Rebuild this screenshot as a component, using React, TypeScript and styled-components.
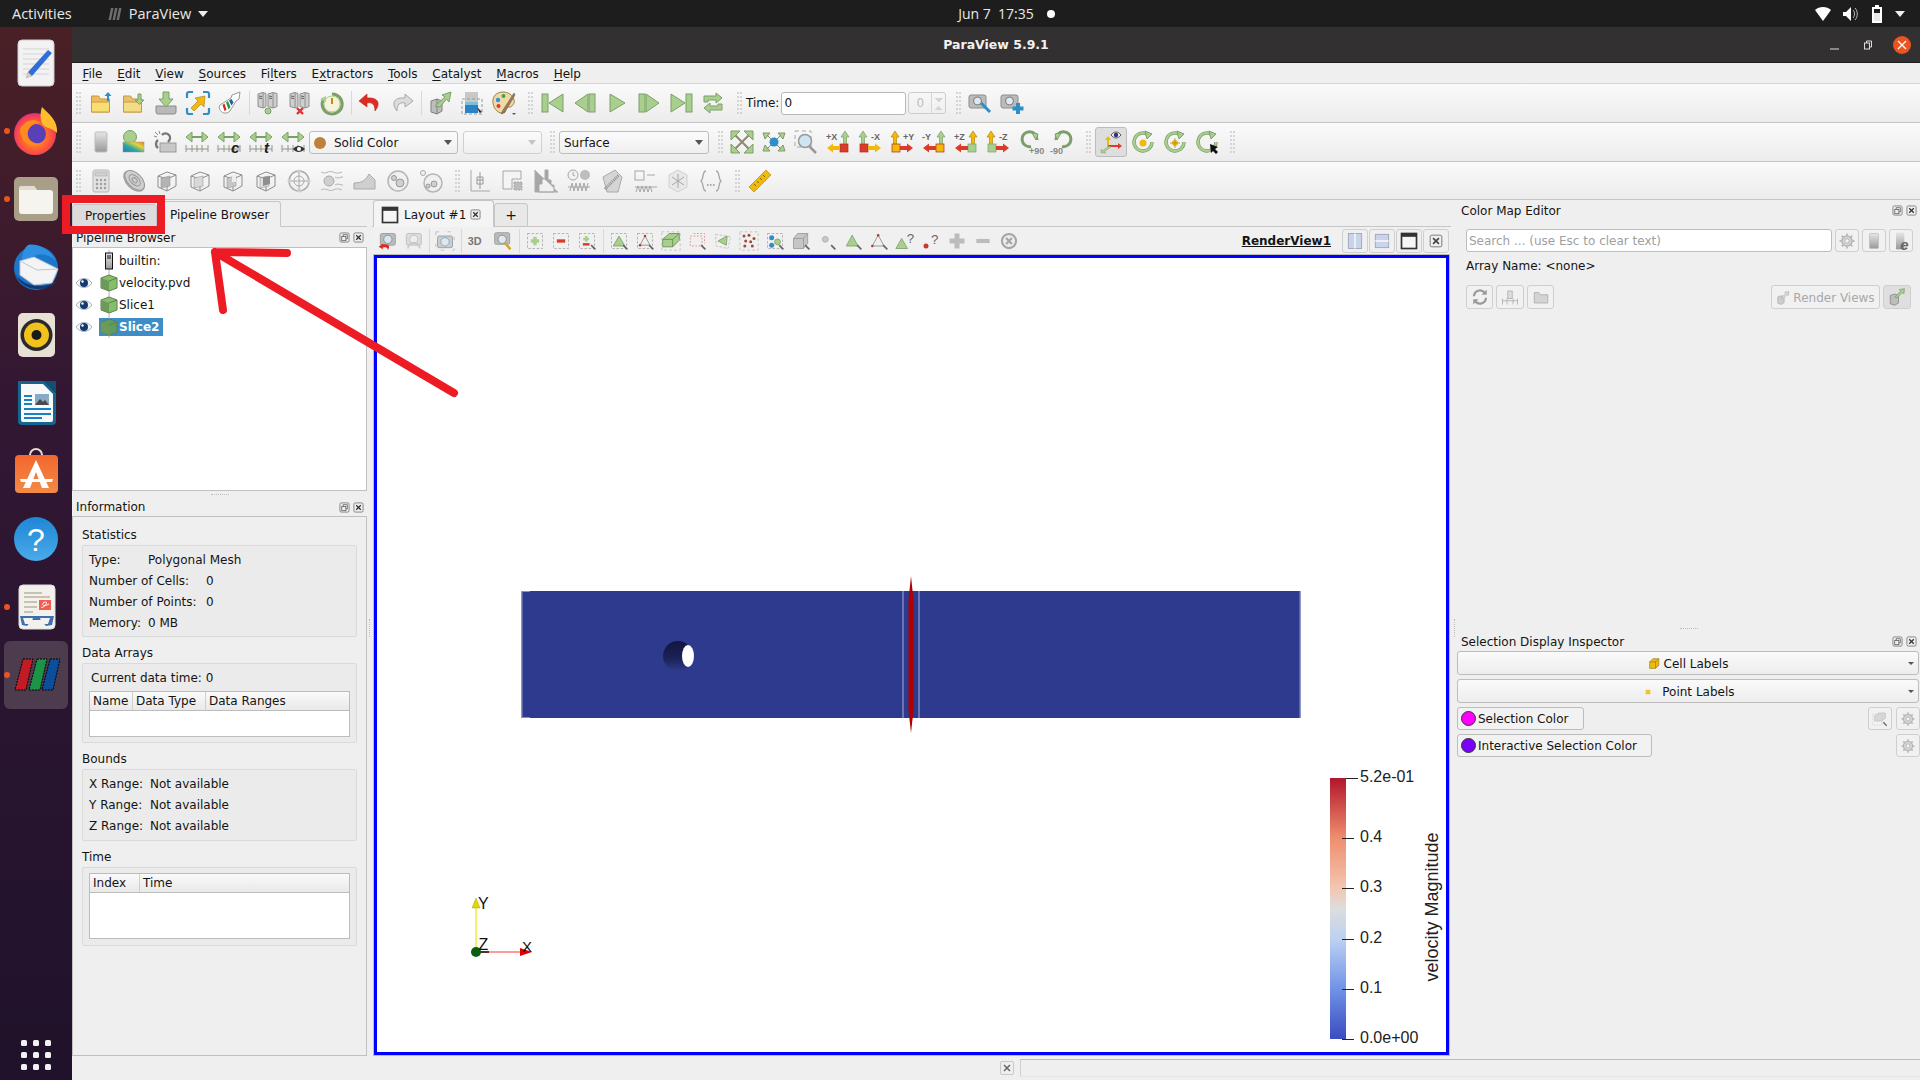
import React from "react";
import styled, { createGlobalStyle } from "styled-components";

const GlobalStyle = createGlobalStyle`
  html, body { margin: 0; padding: 0; width: 1920px; height: 1080px; overflow: hidden; }
  body { font-family: "DejaVu Sans", "Liberation Sans", sans-serif; font-size: 12px; color: #141414; background: #efefef; }
  * { box-sizing: border-box; }
`;

/* ---------- shell ---------- */
const Page = styled.div`
  position: relative;
  width: 1920px;
  height: 1080px;
  display: flex;
  flex-direction: column;
`;
const TopBar = styled.div`
  height: 27px;
  background: #1d1d1d;
  color: #e8e8e8;
  font-family: "Open Sans", "Noto Sans", sans-serif;
  font-size: 14.5px;
  display: grid;
  grid-template-columns: 1fr auto 1fr;
  align-items: center;
  padding: 0 15px 0 12px;
`;
const TopLeft = styled.div`
  display: flex;
  align-items: center;
`;
const AppMenu = styled.div`
  display: flex;
  align-items: center;
  gap: 7px;
  margin-left: 36px;
`;
const Clock = styled.div`
  display: flex;
  align-items: center;
  gap: 13px;
  font-size: 14px;
  padding-left: 96px;
`;
const RecDot = styled.span`
  width: 8px;
  height: 8px;
  border-radius: 50%;
  background: #fff;
`;
const Tray = styled.div`
  display: flex;
  justify-content: flex-end;
  align-items: center;
  gap: 12px;
`;
const Body = styled.div`
  flex: 1;
  display: flex;
  min-height: 0;
`;
const Dock = styled.div`
  width: 72px;
  background: linear-gradient(180deg, #4a2026 0%, #321733 36%, #2a1530 62%, #20122a 100%);
  display: flex;
  flex-direction: column;
  align-items: center;
  padding: 2px 0 10px;
`;
const DockItem = styled.div<{ $active?: boolean }>`
  position: relative;
  width: 64px;
  height: 68px;
  display: flex;
  align-items: center;
  justify-content: center;
  border-radius: 6px;
  background: ${(p) => (p.$active ? "#4d3b4e" : "transparent")};
`;
const RunDot = styled.span`
  position: absolute;
  left: 0;
  top: 31px;
  width: 6px;
  height: 6px;
  border-radius: 50%;
  background: #e95420;
`;
const AppGrid = styled.div`
  margin-top: auto;
  display: grid;
  grid-template-columns: repeat(3, 6px);
  gap: 6px;
`;
const AppGridDot = styled.span`
  width: 6px;
  height: 6px;
  border-radius: 1.5px;
  background: #f2f2f2;
`;
const Window = styled.div`
  flex: 1;
  display: flex;
  flex-direction: column;
  min-width: 0;
`;
const TitleBar = styled.div`
  position: relative;
  height: 36px;
  background: #323030;
  border-bottom: 1px solid #1e1e1e;
  color: #f2f2f2;
  font-weight: bold;
  font-size: 12.5px;
  display: flex;
  align-items: center;
  justify-content: center;
`;
const WinControls = styled.div`
  position: absolute;
  right: 9px;
  top: 9px;
  display: flex;
  align-items: center;
  gap: 23px;
`;
const WinClose = styled.span`
  width: 18px;
  height: 18px;
  margin-left: -3px;
  border-radius: 50%;
  background: #e95420;
  display: flex;
  align-items: center;
  justify-content: center;
`;
const MenuBar = styled.div`
  height: 21px;
  background: #efefef;
  border-bottom: 1px solid #d6d6d6;
  display: flex;
  align-items: center;
  padding: 1px 0 0 3px;
`;
const MenuItem = styled.span`
  padding: 0 7.4px;
  u { text-underline-offset: 2px; }
`;

/* ---------- toolbars ---------- */
const Toolbar = styled.div<{ $h?: number }>`
  height: ${(p) => p.$h ?? 39}px;
  background: linear-gradient(180deg, #fafafa 0%, #ececec 100%);
  border-bottom: 1px solid #c4c4c4;
  display: flex;
  align-items: center;
  padding-left: 4px;
`;
const Grip = styled.span<{ $m?: string }>`
  flex: none;
  width: 5px;
  height: 22px;
  margin: ${(p) => p.$m ?? "0 3px 0 0"};
  border-left: 2px dotted #cdcdcd;
  border-right: 2px dotted #cdcdcd;
  opacity: 0.8;
`;
const ToolSep = styled.span`
  flex: none;
  width: 1px;
  height: 24px;
  margin: 0 2px 0 3px;
  background: #d8d8d8;
`;
const ToolBtn = styled.span<{ $w?: number; $on?: boolean }>`
  flex: none;
  width: ${(p) => p.$w ?? 32}px;
  height: 30px;
  display: flex;
  align-items: center;
  justify-content: center;
  border: 1px solid ${(p) => (p.$on ? "#bcbcbc" : "transparent")};
  border-radius: 3px;
  background: ${(p) => (p.$on ? "#dedede" : "transparent")};
`;
const Combo = styled.div<{ $w: number; $off?: boolean; $ml?: number }>`
  flex: none;
  width: ${(p) => p.$w}px;
  height: 23px;
  margin-left: ${(p) => p.$ml ?? 0}px;
  border: 1px solid ${(p) => (p.$off ? "#d0d0d0" : "#bdbdbd")};
  border-radius: 3px;
  background: linear-gradient(180deg, #fbfbfb, #efefef);
  display: flex;
  align-items: center;
  gap: 8px;
  padding: 1px 5px 0 4px;
`;
const ComboArrow = styled.span<{ $off?: boolean }>`
  margin-left: auto;
  width: 0;
  height: 0;
  border-left: 4px solid transparent;
  border-right: 4px solid transparent;
  border-top: 5px solid ${(p) => (p.$off ? "#c4c4c4" : "#555")};
`;
const Swatch = styled.span<{ $c: string; $size?: number }>`
  flex: none;
  width: ${(p) => p.$size ?? 12}px;
  height: ${(p) => p.$size ?? 12}px;
  border-radius: 50%;
  background: ${(p) => p.$c};
`;
const TimeLabel = styled.span`
  margin: 0 2px 0 0;
`;
const TimeInput = styled.div`
  flex: none;
  width: 125px;
  height: 23px;
  background: #fff;
  border: 1px solid #b8b8b8;
  border-radius: 3px;
  padding: 3px 2px;
  line-height: 15px;
`;
const SpinBox = styled.div`
  flex: none;
  width: 38px;
  height: 22px;
  margin-left: 2px;
  border: 1px solid #cdcdcd;
  border-radius: 3px;
  color: #bdbdbd;
  display: flex;
  align-items: center;
  padding-left: 7px;
`;
const SpinArrows = styled.span`
  margin-left: auto;
  width: 14px;
  height: 100%;
  border-left: 1px solid #d6d6d6;
  background:
    linear-gradient(45deg, transparent 50%, #d4d4d4 50%) no-repeat 3px 5px / 4px 4px,
    linear-gradient(-45deg, transparent 50%, #d4d4d4 50%) no-repeat 7px 5px / 4px 4px,
    linear-gradient(135deg, transparent 50%, #d4d4d4 50%) no-repeat 3px 13px / 4px 4px,
    linear-gradient(-135deg, transparent 50%, #d4d4d4 50%) no-repeat 7px 13px / 4px 4px;
`;

/* ---------- main area ---------- */
const Main = styled.div`
  flex: 1;
  display: flex;
  min-height: 0;
`;
const LeftCol = styled.div`
  flex: none;
  width: 295px;
  display: flex;
  flex-direction: column;
`;
const Gutter = styled.div<{ $w: number }>`
  flex: none;
  width: ${(p) => p.$w}px;
  display: flex;
  align-items: center;
  justify-content: center;
`;
const GutterDots = styled.span`
  height: 18px;
  border-left: 1px dotted #bdbdbd;
`;
const TabRow = styled.div`
  flex: none;
  height: 27px;
  display: flex;
  align-items: flex-end;
  border-bottom: 1px solid #c6c6c6;
`;
const PanelTab = styled.div<{ $on?: boolean }>`
  flex: none;
  height: ${(p) => (p.$on ? 26 : 23)}px;
  width: ${(p) => (p.$on ? "124px" : "85px")};
  margin-bottom: -1px;
  display: flex;
  align-items: center;
  padding: ${(p) => (p.$on ? "1px 0 0 12px" : "0 0 0 12px")};
  background: ${(p) => (p.$on ? "#efefef" : "#dcdcdc")};
  border: 1px solid #c6c6c6;
  border-bottom: ${(p) => (p.$on ? "1px solid #efefef" : "1px solid #c6c6c6")};
  border-radius: 3px 3px 0 0;
`;
const DockTitle = styled.div<{ $h: number; $pl?: number }>`
  flex: none;
  height: ${(p) => p.$h}px;
  display: flex;
  align-items: center;
  padding: 1px 3px 0 ${(p) => p.$pl ?? 4}px;
`;
const DockBtns = styled.div`
  margin-left: auto;
  display: flex;
  gap: 3px;
`;
const Tree = styled.div`
  flex: none;
  height: 244px;
  background: #fff;
  border: 1px solid #c0c0c0;
  padding-top: 2px;
`;
const TreeRow = styled.div`
  height: 22px;
  display: flex;
  align-items: center;
`;
const EyeCell = styled.span`
  flex: none;
  width: 22px;
  display: flex;
  justify-content: center;
`;
const TreeItem = styled.span<{ $sel?: boolean }>`
  display: flex;
  align-items: center;
  height: ${(p) => (p.$sel ? 18 : 22)}px;
  margin-left: 4px;
  padding-right: 4px;
  background: ${(p) => (p.$sel ? "#3f8dc6" : "transparent")};
  color: ${(p) => (p.$sel ? "#fff" : "inherit")};
  font-weight: ${(p) => (p.$sel ? "bold" : "normal")};
`;
const HSplit = styled.div<{ $h: number }>`
  flex: none;
  height: ${(p) => p.$h}px;
  display: flex;
  align-items: center;
  justify-content: center;
`;
const HSplitDots = styled.span`
  width: 18px;
  border-top: 1px dotted #bdbdbd;
`;
const InfoBox = styled.div`
  flex: 1;
  min-height: 0;
  border: 1px solid #c0c0c0;
  padding: 2px 9px 0;
`;
const GroupLabel = styled.div`
  height: 26px;
  display: flex;
  align-items: flex-end;
  padding-bottom: 3px;
`;
const Group = styled.div<{ $pad: string }>`
  border: 1px solid #dadada;
  border-radius: 2px;
  background: #ebebeb;
  padding: ${(p) => p.$pad};
`;
const Row = styled.div<{ $ml?: number }>`
  height: 21px;
  display: flex;
  align-items: center;
  margin-left: ${(p) => p.$ml ?? 0}px;
`;
const RowKey = styled.span<{ $w: number }>`
  flex: none;
  width: ${(p) => p.$w}px;
`;
const DataTable = styled.div<{ $h: number; $mt?: number }>`
  height: ${(p) => p.$h}px;
  margin-top: ${(p) => p.$mt ?? 0}px;
  background: #fff;
  border: 1px solid #bcbcbc;
`;
const DataHead = styled.div`
  height: 19px;
  display: flex;
  background: linear-gradient(180deg, #fafafa, #e9e9e9);
  border-bottom: 1px solid #bcbcbc;
`;
const DataCol = styled.span<{ $w?: number }>`
  flex: ${(p) => (p.$w ? "none" : "1")};
  width: ${(p) => (p.$w ? `${p.$w}px` : "auto")};
  padding-left: 3px;
  line-height: 18px;
  border-right: 1px solid #cfcfcf;
  &:last-child { border-right: none; }
`;

const Center = styled.div`
  flex: none;
  width: 1079px;
  display: flex;
  flex-direction: column;
`;
const CenterTabs = styled(TabRow)`
  padding-left: 1px;
`;
const LayoutTab = styled.div`
  flex: none;
  width: 121px;
  height: 27px;
  margin-bottom: -1px;
  background: #f4f4f4;
  border: 1px solid #c6c6c6;
  border-bottom: none;
  border-radius: 3px 3px 0 0;
  display: flex;
  align-items: center;
  gap: 4px;
  padding: 1px 0 0 6px;
`;
const PlusTab = styled.div`
  flex: none;
  width: 34px;
  height: 24px;
  margin-bottom: -1px;
  background: #e8e8e8;
  border: 1px solid #c6c6c6;
  border-radius: 3px 3px 0 0;
  display: flex;
  align-items: center;
  justify-content: center;
  font-size: 14px;
`;
const ViewBar = styled.div`
  flex: none;
  height: 28px;
  display: flex;
  align-items: center;
  padding: 0 2px;
  background: #f0f0f0;
`;
const ViewName = styled.span`
  margin-left: auto;
  margin-right: 10px;
  font-weight: bold;
  text-decoration: underline;
`;
const ViewBtn = styled.span`
  flex: none;
  width: 26px;
  height: 24px;
  margin-left: 1px;
  border: 1px solid #cfcfcf;
  border-radius: 3px;
  display: flex;
  align-items: center;
  justify-content: center;
`;
const ViewFrame = styled.div`
  flex: 1;
  min-height: 0;
  margin: 0 2px 1px;
  background: #fff;
  border: 3px solid #0000ff;
  outline: 1px solid #bdbdbd;
  svg { display: block; }
`;

const RightCol = styled.div`
  flex: 1;
  min-width: 0;
  display: flex;
  flex-direction: column;
`;
const ColorMap = styled.div`
  flex: none;
  height: 425px;
  padding: 0 0 0 4px;
`;
const SearchRow = styled.div`
  display: flex;
  align-items: center;
  gap: 3px;
  margin: 9px 0 0 5px;
`;
const SearchInput = styled.div`
  flex: none;
  width: 366px;
  height: 23px;
  background: #fff;
  border: 1px solid #bdbdbd;
  border-radius: 3px;
  padding-left: 2px;
  color: #a0a0a0;
  line-height: 22px;
`;
const SquareBtn = styled.span<{ $w?: number; $h?: number; $on?: boolean }>`
  flex: none;
  width: ${(p) => p.$w ?? 24}px;
  height: ${(p) => p.$h ?? 23}px;
  border: 1px solid #cfcfcf;
  border-radius: 3px;
  background: ${(p) => (p.$on ? "#dfdfdf" : "#f1f1f1")};
  display: flex;
  align-items: center;
  justify-content: center;
`;
const ArrayName = styled.div`
  margin: 7px 0 0 5px;
  height: 14px;
  line-height: 14px;
`;
const MapButtons = styled.div`
  display: flex;
  align-items: center;
  gap: 3px;
  margin: 12px 9px 0 5px;
`;
const RenderViewsBtn = styled(SquareBtn)`
  width: 109px;
  margin-left: auto;
  gap: 3px;
  padding-top: 1px;
  color: #a8a8a8;
`;
const Selection = styled.div`
  flex: 1;
  padding: 0 1px 0 0;
  display: flex;
  flex-direction: column;
`;
const SelTitle = styled.div`
  height: 19px;
  display: flex;
  align-items: center;
  padding: 0 2px 0 4px;
`;
const WideBtn = styled.div`
  position: relative;
  height: 24px;
  margin-bottom: 4px;
  padding-top: 1px;
  border: 1px solid #bdbdbd;
  border-radius: 3px;
  background: linear-gradient(180deg, #fafafa, #ededed);
  display: flex;
  align-items: center;
  justify-content: center;
  gap: 3px;
`;
const WideCaret = styled.span`
  position: absolute;
  right: 4px;
  top: 10px;
  width: 0;
  height: 0;
  border-left: 3px solid transparent;
  border-right: 3px solid transparent;
  border-top: 3px solid #555;
`;
const ColorRow = styled.div`
  height: 23px;
  margin-bottom: 4px;
  display: flex;
  align-items: center;
`;
const ColorBtn = styled.div<{ $w: number }>`
  flex: none;
  width: ${(p) => p.$w}px;
  height: 23px;
  border: 1px solid #bdbdbd;
  border-radius: 3px;
  background: #f2f2f2;
  display: flex;
  align-items: center;
  gap: 2px;
  padding-left: 3px;
`;
const RingSwatch = styled(Swatch)`
  border: 1px solid #333;
`;
const RowTools = styled.div`
  margin-left: auto;
  margin-right: -1px;
  display: flex;
  gap: 4px;
`;
const StatusBar = styled.div`
  flex: none;
  height: 24px;
  display: flex;
  align-items: center;
`;
const StatusClose = styled.span`
  margin-left: 928px;
  width: 14px;
  height: 14px;
  display: flex;
  align-items: center;
  justify-content: center;
  border: 1px solid #c8c8c8;
  border-radius: 2px;
`;
const Progress = styled.div`
  flex: 1;
  height: 18px;
  margin-left: 6px;
  margin-top: 3px;
  align-self: flex-start;
  border-top: 1px solid #bcbcbc;
  border-left: 1px solid #d0d0d0;
  border-bottom: 1px solid #e4e4e4;
`;
const Annotation = styled.svg`
  position: absolute;
  left: 0;
  top: 0;
  pointer-events: none;
`;
const IconSvg = styled.svg`
  flex: none;
  overflow: visible;
`;
const DefsSvg = styled.svg`
  position: absolute;
`;

/* ---------- icons ---------- */
const Ic = ({ s = 24, children }: { s?: number; children: React.ReactNode }) => (
  <IconSvg width={s} height={s} viewBox="0 0 24 24">{children}</IconSvg>
);
const GF = "#a9cf8f";
const GS = "#7c9f69";
const YF = "#f1b90c";
const RF = "#dd3b2a";
const LG = "#cfcfcf";
const MG = "#a6a6a6";
const TXT = "Liberation Sans, sans-serif";

const Folder = ({ hi }: { hi?: boolean }) => (
  <g stroke="#c39a4b" strokeWidth="1">
    <path d="M1.5 5h7l2 3h9v13h-18z" fill={hi ? "#f4b95c" : "#e9c070"} />
    <path d="M1.5 11h18v10h-18z" fill={hi ? "#f9df72" : "#f4dc84"} />
  </g>
);
const Servers = ({ children }: { children?: React.ReactNode }) => (
  <g>
    <path d="M2 3l5-1.5 3 1v13l-3 1.5-5-1.5z M12 3l5-1.5 4 1v13l-4 1.5-5-1.5z" fill={LG} stroke="#8e8e8e" />
    <path d="M7 2v15M17 2v15" stroke="#8e8e8e" />
    <path d="M3 5l3 .6M3 7l3 .6M13 5l3 .6M13 7l3 .6" stroke="#666" />
    {children}
  </g>
);
const CubeGray = ({ fill = LG }: { fill?: string }) => (
  <g stroke="#8c8c8c">
    <path d="M3 7l9-4 9 3v11l-9 5-9-4z" fill="none" />
    <path d="M3 7l9 3 9-4M12 10v12" fill="none" />
    <path d="M6 9l9-2v10l-9 2z" fill={fill} strokeWidth="0.5" />
  </g>
);
const TickRange = ({ children }: { children?: React.ReactNode }) => (
  <g>
    <path d="M3 7h18" stroke={GS} strokeWidth="2" />
    <path d="M7 2L1 7l6 5zM17 2l6 5-6 5z" fill={GF} stroke={GS} />
    <path d="M1 19h22M1 15v7M7 15v7M12 15v7M17 15v7M23 15v7" stroke="#8f9a88" fill="none" />
    {children}
  </g>
);
const DashBox = ({ children }: { children?: React.ReactNode }) => (
  <g>
    <rect x="3" y="3" width="18" height="18" fill="none" stroke="#aaa" strokeDasharray="3 2" />
    {children}
  </g>
);
const Cursor = () => <path d="M17 17l5 5" stroke="#666" strokeWidth="2" />;

const AxisBtn = ({ label, flip, up, box, side }: { label: string; flip?: boolean; up: string; box: string; side: string }) => (
  <Ic>
    <g transform={flip ? "translate(24 0) scale(-1 1)" : undefined}>
      <path d="M19 1l-4 6h2.5v9h3V7H23z" fill={up} stroke={up === GF ? GS : "#b18a10"} strokeWidth="0.7" />
      <rect x="14" y="14" width="8" height="8" fill={box} stroke={box === GF ? GS : "#a6341f"} strokeWidth="0.7" />
      <path d="M1 18l6-4.5V16h7v4H7v2.5z" fill={side} />
    </g>
    <text x={flip ? 13 : 0} y="10" fontSize="9" fontWeight="bold" fill="#666" fontFamily={TXT}>{label}</text>
  </Ic>
);
const Rotate = ({ children }: { children?: React.ReactNode }) => (
  <g>
    <path d="M21 12a9 9 0 1 1-4-7.5" fill="none" stroke={GS} strokeWidth="3.4" />
    <path d="M21 12a9 9 0 1 1-4-7.5" fill="none" stroke={GF} strokeWidth="2" />
    <path d="M14 1l7 3-5 5z" fill={GF} stroke={GS} />
    {children}
  </g>
);

const icons: Record<string, React.ReactNode> = {
  open: <><Folder hi /><path d="M17 10V5h-2.5L18 1l3.5 4H19v5z" fill="#2e8fc8" /></>,
  recent: <><Folder /><path d="M16 3v6h-3l4.5 4.5L22 9h-3V3z" fill={GF} stroke={GS} /></>,
  save: <><path d="M2 15h20v6a2 2 0 0 1-2 2H4a2 2 0 0 1-2-2z" fill="#b9b9b9" stroke="#8b8b8b" /><path d="M9 1v7H5l7 8 7-8h-4V1z" fill={GF} stroke={GS} /></>,
  fit: <><path d="M1 7V3a2 2 0 0 1 2-2h4M17 1h4a2 2 0 0 1 2 2v4M23 17v4a2 2 0 0 1-2 2h-4M7 23H3a2 2 0 0 1-2-2v-4" fill="none" stroke="#2e8fc8" strokeWidth="2.2" /><path d="M19 5l-10 2 3 3-7 7 3 3 7-7 3 3z" fill={YF} stroke="#a37f10" strokeWidth="0.6" /></>,
  flask: <><path d="M22 1L14 4l-1 3L2 14c-2 2 0 7 4 8 3 .5 5-1 6-2l6-10 3-2z" fill="#fff" stroke="#999" /><path d="M4.500 14l2 6 2-1-2-6.500z" fill="#d22" /><path d="M8 11.500l2.500 7 2-2.500-2.500-6z" fill="#2a9a3f" /><path d="M11 9.500l2.500 5 2-3-2-3.500z" fill="#1b5da8" /></>,
  connect: <Servers><circle cx="12" cy="20" r="3" fill={GF} stroke={GS} /></Servers>,
  disconnect: <Servers><path d="M9 17l6 6M15 17l-6 6" stroke="#d33" strokeWidth="2.4" /></Servers>,
  clock: <><path d="M12 3a10 10 0 1 1-9 6" fill="none" stroke={GS} strokeWidth="3" /><circle cx="12" cy="13" r="8" fill="#f6f3da" stroke={GF} strokeWidth="1" /><path d="M12 7v6" stroke="#c58a12" strokeWidth="2" /><path d="M0 8l6-3 0 6z" fill={GF} /></>,
  undo: <path d="M9 3L1 10l8 6v-4c5-1 8 1 8 8 5-6 5-14-8-13z" fill="#e02b20" stroke="#b3261c" strokeWidth="0.6" />,
  redo: <path d="M15 3l8 7-8 6v-4c-5-1-8 1-8 8-5-6-5-14 8-13z" fill="#dcdcdc" stroke="#a8a8a8" />,
  viewLink: <><path d="M3 10l6-2 5 2v10l-5 3-6-2z" fill="#bdbdbd" stroke="#808080" /><path d="M9 8v15" stroke="#808080" /><path d="M7 15L17 6l-3-2 9-3-2 10-2.500-3L12 16z" fill={GF} stroke={GS} /></>,
  gradBox: <><path d="M5 1h13v13H5z" fill="#c8c8c8" /><rect x="5" y="12" width="13" height="10" fill="#2b82c6" /><rect x="5" y="11" width="13" height="3" fill="#7cc0d8" /><rect x="2" y="8" width="20" height="15" fill="none" stroke="#999" strokeDasharray="3 2" /><path d="M17 16l5 5-2 1-1-1z" fill="#333" /></>,
  palette: <><path d="M11 1C4 1 0 6 1 12c1 7 6 11 11 10 2-.5 1-3 1-4 0-2 3-2 5-2 3-1 5-4 4-7C21 4 16 1 11 1z" fill="#f1d9a7" stroke="#a0804a" /><circle cx="6" cy="9" r="2.200" fill="#2e95d8" /><circle cx="11.500" cy="5" r="2" fill="#3ca84a" /><circle cx="6.500" cy="15" r="2" fill="#e2362c" /><path d="M22 2L11 19l-2 4 4-2L23 4z" fill="#9a7a54" stroke="#6c5539" strokeWidth="0.5" /><path d="M20 22h4l-2 2z" fill="#555" /></>,
  first: <><rect x="1" y="3" width="6" height="18" fill={GF} stroke={GS} /><path d="M8 12L22 3v18z" fill={GF} stroke={GS} /></>,
  prev: <><path d="M2 12L15 3v18z" fill={GF} stroke={GS} /><rect x="16" y="3" width="6" height="18" fill={GF} stroke={GS} /></>,
  play: <path d="M5 3l15 9-15 9z" fill={GF} stroke={GS} />,
  next: <><rect x="2" y="3" width="6" height="18" fill={GF} stroke={GS} /><path d="M9 3l13 9-13 9z" fill={GF} stroke={GS} /></>,
  last: <><path d="M2 3l14 9-14 9z" fill={GF} stroke={GS} /><rect x="17" y="3" width="6" height="18" fill={GF} stroke={GS} /></>,
  loop: <g fill={GF} stroke={GS}><path d="M3 11V5h12V2l6 5-6 5V9H7v2z" /><path d="M21 13v6H9v3l-6-5 6-5v3h8v-2z" /></g>,
  camKey: <><rect x="1" y="4" width="17" height="13" rx="2" fill="#bbb" stroke="#8c8c8c" /><circle cx="9.500" cy="10" r="4" fill="#dfe8ee" stroke="#777" /><path d="M13 12l9 9" stroke="#2e8fc8" strokeWidth="3" /></>,
  camPlus: <><rect x="1" y="4" width="17" height="13" rx="2" fill="#bbb" stroke="#8c8c8c" /><circle cx="9.500" cy="10" r="4" fill="#dfe8ee" stroke="#777" /><path d="M18 12v11M12.500 17.500h11" stroke="#2e8fc8" strokeWidth="4" /></>,
  solidBar: <rect x="6" y="2" width="12" height="20" rx="1.500" fill="url(#grayBar)" stroke="#bdbdbd" />,
  rescaleMap: <><circle cx="9" cy="7" r="6.500" fill={GF} stroke={GS} /><rect x="2" y="12" width="21" height="10" fill="url(#rainbow)" stroke="#999" strokeWidth="0.5" /></>,
  linkBreak: <><rect x="7" y="13" width="16" height="9" fill="#c8c8c8" stroke="#999" /><path d="M5 18a5 5 0 0 1 0-8M9 5a5 5 0 0 1 7 0c2 2 1 5-1 7" fill="none" stroke="#777" strokeWidth="2.400" /><path d="M2 2l3 3M6 1l1 3M1 6l3 1" stroke="#888" /></>,
  rangeA: <TickRange />,
  rangeC: <TickRange><text x="14" y="23" fontSize="15" fontWeight="bold" fontStyle="italic" fill="#222" fontFamily={TXT}>c</text></TickRange>,
  rangeT: <TickRange><text x="15" y="23" fontSize="15" fontWeight="bold" fontStyle="italic" fill="#222" fontFamily={TXT}>t</text></TickRange>,
  rangeV: <TickRange><path d="M12 19c3-4 8-4 12 0-4 4-9 4-12 0z" fill="#333" /><circle cx="18" cy="19" r="2" fill="#fff" /></TickRange>,
  resetFit: <g fill={GF} stroke={GS}><path d="M5 5l14 14M19 5L5 19" stroke="#8a8a70" strokeWidth="2" /><path d="M1 1h9L1 10zM23 1h-9l9 9zM1 23h9L1 14zM23 23h-9l9-9z" /></g>,
  resetCenter: <><g fill={GF} stroke={GS}><path d="M1 3l7 0-5 6zM23 3l-7 0 5 6zM1 21l7 0-5-6zM23 21l-7 0 5-6z" /></g><path d="M5 5l14 14M19 5L5 19" stroke="#8a8a70" /><circle cx="12" cy="12" r="4.500" fill="#2e8fc8" /></>,
  zoomBox: <><rect x="1" y="1" width="16" height="16" fill="none" stroke="#aaa" strokeDasharray="4 3" /><circle cx="11" cy="11" r="6.500" fill="#cfe6f2" stroke="#999" strokeWidth="1.500" /><path d="M15 16l7 7" stroke="#999" strokeWidth="2.500" /></>,
  rotPlus: <><path d="M19 10a7.500 7.500 0 1 0-6 6.500" fill="none" stroke={GS} strokeWidth="3" /><path d="M14 3l6 1-2 6z" fill={GF} stroke={GS} /><text x="11" y="24" fontSize="9" fontWeight="bold" fill="#888" fontFamily={TXT}>+90</text></>,
  rotMinus: <><path d="M6 10a7.500 7.500 0 1 1 6 6.500" fill="none" stroke={GS} strokeWidth="3" /><path d="M11 3L5 4l2 6z" fill={GF} stroke={GS} /><text x="0" y="24" fontSize="9" fontWeight="bold" fill="#888" fontFamily={TXT}>-90</text></>,
  orient: <><path d="M9 6l-3 4h2v7h2v-7h2z" fill={YF} /><path d="M9 15h10v-2l4 3-4 3v-2H9z" fill={RF} /><path d="M10 16l-7 5-1-2 0 4 5 0-2-1 7-5z" fill={GF} stroke={GS} strokeWidth="0.4" /><path d="M12 5c3-4 7-4 10 0-3 4-7 4-10 0z" fill="#eee" stroke="#555" /><circle cx="17" cy="5" r="2.200" fill="#33337a" /></>,
  rotCenter: <Rotate><circle cx="12" cy="13" r="3.500" fill={YF} /></Rotate>,
  rotPick: <Rotate><circle cx="12" cy="13" r="3" fill={YF} /><path d="M12 8v10M7 13h10" stroke="#b68e16" strokeWidth="0.8" /></Rotate>,
  rotCursor: <Rotate><path d="M15 14l8 3-3 2 3 3-2 2-3-3-2 2z" fill="#111" /></Rotate>,
  calc: <><rect x="4" y="1" width="16" height="22" rx="2" fill="#e2e2e2" stroke="#b5b5b5" /><rect x="6" y="3" width="12" height="4" fill="#cfcfcf" stroke={MG} strokeWidth="0.5" /><g fill="#9d9d9d"><circle cx="8" cy="11" r="1.200" /><circle cx="12" cy="11" r="1.200" /><circle cx="16" cy="11" r="1.200" /><circle cx="8" cy="15" r="1.200" /><circle cx="12" cy="15" r="1.200" /><circle cx="16" cy="15" r="1.200" /><circle cx="8" cy="19" r="1.200" /><circle cx="12" cy="19" r="1.200" /><circle cx="16" cy="19" r="1.200" /></g></>,
  disc: <g transform="rotate(45 12 12)"><ellipse cx="12" cy="12" rx="13" ry="8" fill={MG} /><ellipse cx="12" cy="11" rx="12" ry="7" fill={LG} stroke="#999" /><ellipse cx="12" cy="11" rx="7" ry="4" fill="none" stroke="#999" /><ellipse cx="12" cy="11" rx="3" ry="2" fill="none" stroke="#999" /></g>,
  cube1: <CubeGray fill="#b4b4b4" />,
  cube2: <CubeGray fill="#d8d8d8" />,
  cube3: <><CubeGray fill="#c6c6c6" /><path d="M11 5v8h4V7z" fill="#eee" /></>,
  cube4: <><CubeGray fill="#dedede" /><path d="M9 8l7-1v8l-7 2z" fill="#8f8f8f" /></>,
  sphereNet: <><circle cx="12" cy="12" r="10" fill="none" stroke="#aaa" strokeWidth="1.500" /><circle cx="12" cy="12" r="5" fill="none" stroke="#aaa" /><path d="M2 12h20M12 2v20" stroke="#aaa" /><circle cx="12" cy="2.500" r="2" fill="#ccc" /><circle cx="12" cy="21.500" r="2" fill="#ccc" /><circle cx="2.500" cy="12" r="2" fill="#ccc" /><circle cx="21.500" cy="12" r="2" fill="#ccc" /></>,
  stream: <><circle cx="9" cy="12" r="5" fill={LG} stroke="#aaa" /><path d="M1 3c5 3 7-2 12 0s6 1 9 0M1 21c5-3 7 2 12 0s6-1 9 0M15 8c3 2 5 0 8 0M15 16c3-2 5 0 8 0" fill="none" stroke="#b5b5b5" /></>,
  wedge: <path d="M1 14c8 0 12-3 15-9l6 6v9H1z" fill={LG} stroke="#aaa" />,
  blobs: <><circle cx="12" cy="12" r="10" fill="#f0f0f0" stroke="#b5b5b5" strokeWidth="1.500" /><circle cx="14" cy="14" r="4" fill={LG} stroke="#999" /><circle cx="8" cy="9" r="2.500" fill={LG} stroke="#999" /></>,
  blobsOut: <><circle cx="14" cy="14" r="9" fill="#f0f0f0" stroke="#b5b5b5" strokeWidth="1.500" /><circle cx="15" cy="15" r="3" fill={LG} stroke="#999" /><circle cx="9" cy="17" r="2" fill={LG} stroke="#999" /><circle cx="4" cy="4" r="2.500" fill="#f0f0f0" stroke="#aaa" /></>,
  plotBox: <><path d="M3 1v21h19" fill="none" stroke={MG} /><path d="M12 3v17M9 8h6v7H9zM9 11h6" fill="none" stroke="#999" /></>,
  select2: <><path d="M2 2h18v8h-9v10H2z" fill="#f4f4f4" stroke={MG} /><rect x="13" y="13" width="8" height="8" fill="#bbb" stroke="#aaa" strokeDasharray="2 1" /></>,
  histo: <path d="M1 1v22h23M5 23v-8h3V10h3V1h3v10h3v5h3v7z" fill={MG} stroke="#aaa" />,
  quartile: <><circle cx="6" cy="6" r="5" fill="#f2f2f2" stroke={MG} /><path d="M6 3v3l2 1" stroke={MG} fill="none" /><circle cx="18" cy="6" r="5" fill="#bdbdbd" /><path d="M1 18h22M3 22l2-8 2 8 2-8 2 8 2-8 2 8 2-8 2 8 2-8" fill="none" stroke={MG} /></>,
  pen: <><path d="M3 8l12-7 7 7-4 15H7z" fill="#d5d5d5" stroke="#aaa" /><path d="M5 20L19 6" stroke="#8f8f8f" strokeWidth="3" strokeDasharray="1 1" /></>,
  faded: <><rect x="2" y="2" width="9" height="9" fill="none" stroke={MG} /><path d="M14 6h8M2 18h22M3 23l2-6 2 6 2-6 2 6 2-6 2 6 2-6 2 6" fill="none" stroke={MG} /></>,
  star: <><path d="M3 6l9-5 9 5v12l-9 5-9-5z" fill="#e8e8e8" stroke="#d0d0d0" /><path d="M12 5v14M6 8l12 8M18 8L6 16" stroke={MG} /></>,
  braces: <><path d="M7 2C3 2 5 10 2 12c3 2 1 10 5 10M17 2c4 0 2 8 5 10-3 2-1 10-5 10" fill="none" stroke={MG} strokeWidth="1.300" /><path d="M8 16h1.500M11 16h1.500M14 16h1.500" stroke={MG} strokeWidth="2" /></>,
  ruler: <><path d="M18 1l5 5L6 23l-5-5z" fill={YF} stroke="#a37f10" strokeWidth="0.6" /><path d="M15 6l2 2M12 9l2 2M9 12l2 2M6 15l2 2" stroke="#8a6a08" /></>,
  viewUndo: <><rect x="4" y="3" width="18" height="14" rx="2" fill="#bbb" stroke="#999" /><circle cx="13" cy="10" r="5" fill="#d8e6ee" stroke="#888" /><path d="M7 15l-5 4 5 3v-2c4-1 6 0 6 3 3-4 2-8-6-7z" fill="#e02b20" /></>,
  viewRedo: <><rect x="4" y="3" width="18" height="14" rx="2" fill="#ddd" stroke="#bbb" /><circle cx="13" cy="10" r="5" fill="#eee" stroke="#bbb" /><path d="M6 21a7 7 0 0 1 14 0" fill="none" stroke="#c8c8c8" strokeWidth="2" /></>,
  capture: <><rect x="1" y="1" width="22" height="22" fill="none" stroke="#bbb" strokeDasharray="4 10" /><rect x="3" y="6" width="18" height="14" rx="2" fill="#ccc" stroke="#999" /><circle cx="12" cy="13" r="5" fill="#dfe8ee" stroke="#7aa7c7" /></>,
  threeD: <text x="1" y="17" fontSize="13" fontWeight="bold" fill="#777" fontFamily={TXT}>3D</text>,
  zoomView: <><rect x="2" y="2" width="18" height="14" rx="2" fill="#bbb" stroke="#999" /><circle cx="11" cy="10" r="5" fill="#dfe8ee" stroke="#888" /><path d="M14 14l7 8" stroke="#d3a92b" strokeWidth="3" /></>,
  selPlus: <DashBox><path d="M12 7v10M7 12h10" stroke={GF} strokeWidth="4" /></DashBox>,
  selMinus: <DashBox><path d="M7 12h10" stroke={RF} strokeWidth="4" /></DashBox>,
  selToggle: <DashBox><path d="M11 6v7M7.500 9.500h7" stroke={GF} strokeWidth="3" /><path d="M7 16h8" stroke={RF} strokeWidth="3" /><Cursor /></DashBox>,
  selTri: <DashBox><path d="M12 6l7 12H5z" fill={GF} stroke={GS} /><Cursor /></DashBox>,
  selTriPts: <DashBox><path d="M12 6l6 11H6z" fill="none" stroke="#888" /><circle cx="12" cy="6" r="1.500" fill="#b23b2c" /><circle cx="6" cy="17" r="1.500" fill="#b23b2c" /><Cursor /></DashBox>,
  selBlock: <><path d="M2 10l8-7h12v8l-8 8H2z" fill={GF} stroke="#5f8a4c" /><path d="M2 10h12v9M14 10l8-7" fill="none" stroke="#5f8a4c" /><rect x="1" y="1" width="22" height="22" fill="none" stroke="#bbb" strokeDasharray="3 3" /></>,
  selFrustum: <><path d="M4 6h14v12H4zM8 3h13v12" fill="none" stroke="#d28a82" strokeDasharray="2 2" /><Cursor /></>,
  selPoly: <><path d="M3 4l18 3-3 14-14-3z" fill="none" stroke="#bbb" strokeDasharray="3 2" /><path d="M17 6l-1 11-10-5z" fill={GF} stroke={GS} /></>,
  selPointsMany: <><rect x="1" y="1" width="22" height="22" fill="none" stroke="#bbb" strokeDasharray="3 3" /><g fill="#a04a3c"><circle cx="6" cy="6" r="1.800" /><circle cx="12" cy="5" r="1.800" /><circle cx="18" cy="9" r="1.800" /><circle cx="8" cy="12" r="1.800" /><circle cx="14" cy="13" r="1.800" /><circle cx="7" cy="18" r="1.800" /><circle cx="16" cy="18" r="1.800" /></g></>,
  selInteract: <DashBox><circle cx="8" cy="8" r="3" fill="#2e8fc8" /><circle cx="8" cy="17" r="3" fill="#2e8fc8" /><circle cx="15" cy="13" r="3.500" fill={GF} stroke={GS} /><Cursor /></DashBox>,
  selCube: <><path d="M3 9l5-6h12v12l-5 6H3z" fill="#c6c6c6" stroke="#999" /><path d="M3 9h12v12M15 9l5-6" fill="none" stroke="#999" /><Cursor /></>,
  hoverPt: <><circle cx="10" cy="10" r="3.500" fill="#c8c8c8" stroke="#aaa" /><Cursor /></>,
  hoverTri: <><path d="M11 5l7 13H4z" fill={GF} stroke={GS} /><Cursor /></>,
  hoverTriPts: <><path d="M11 5l7 13H4z" fill="none" stroke="#888" /><circle cx="11" cy="5" r="1.500" fill="#b23b2c" /><circle cx="4" cy="18" r="1.500" fill="#b23b2c" /><Cursor /></>,
  qTri: <><path d="M8 9l7 12H1z" fill={GF} stroke={GS} /><text x="14" y="14" fontSize="16" fill="#666" fontFamily={TXT}>?</text></>,
  qPt: <><circle cx="6" cy="18" r="3" fill="#c8392b" /><text x="12" y="15" fontSize="16" fill="#666" fontFamily={TXT}>?</text></>,
  plusBig: <path d="M12 3v18M3 12h18" stroke="#bcbcbc" strokeWidth="6" />,
  minusBig: <path d="M4 12h16" stroke="#bcbcbc" strokeWidth="5" />,
  xCircle: <><circle cx="12" cy="12" r="8.500" fill="#ececec" stroke="#a5a5a5" strokeWidth="2.500" /><path d="M8.500 8.500l7 7M15.500 8.500l-7 7" stroke="#a5a5a5" strokeWidth="2.500" /></>,
  gear: <><circle cx="12" cy="12" r="7" fill="#d4d4d4" stroke="#aaa" strokeWidth="1.500" /><circle cx="12" cy="12" r="3" fill="#f2f2f2" stroke="#aaa" /><path d="M12 2v4M12 18v4M2 12h4M18 12h4M5 5l3 3M16 16l3 3M5 19l3-3M16 8l3-3" stroke="#bbb" strokeWidth="2.500" /></>,
  barE: <><rect x="6" y="2" width="10" height="20" fill="url(#grayBar)" /><text x="11" y="23" fontSize="18" fontWeight="bold" fontStyle="italic" fill="#666" fontFamily={TXT}>e</text></>,
  refresh: <><g fill="none" stroke="#9a9a9a" strokeWidth="3"><path d="M4 11a8 8 0 0 1 14-5" /><path d="M20 13a8 8 0 0 1-14 5" /></g><path d="M21 2v7h-7zM3 22v-7h7z" fill="#9a9a9a" /></>,
  handTick: <><path d="M9 4h6v10H9z" fill="#ddd" stroke={MG} /><path d="M2 17h20M2 14v8M8 14v8M16 14v8M22 14v8" stroke={MG} fill="none" /></>,
  folderGray: <path d="M3 6h6l2 3h10v11H3z" fill="#d4d4d4" stroke={MG} />,
  viewGray: <><path d="M3 10l6-2 5 2v10l-5 3-6-2z" fill="#ccc" stroke={MG} /><path d="M9 12l8-8-2-2 7-1-1 7-2-2-7 7z" fill="#ddd" stroke={MG} /></>,
  viewGreen: <><path d="M3 10l6-2 5 2v10l-5 3-6-2z" fill="#bdbdbd" stroke="#808080" /><path d="M9 12l8-8-2-2 7-1-1 7-2-2-7 7z" fill={GF} stroke={GS} /></>,
  splitV: <><rect x="4" y="3" width="16" height="18" fill="#c9d3ea" stroke="#98a0b4" /><path d="M12 3v18" stroke="#f4f4f4" strokeWidth="2" /></>,
  splitH: <><rect x="4" y="4" width="16" height="16" fill="#c9d3ea" stroke="#98a0b4" /><path d="M4 12h16" stroke="#f4f4f4" strokeWidth="2" /></>,
  maximize: <><rect x="3" y="3" width="18" height="18" fill="#f6f6f6" stroke="#333" strokeWidth="2" /><rect x="3" y="3" width="18" height="4" fill="#333" /></>,
  boxX: <><rect x="5" y="5" width="14" height="14" rx="2" fill="#eee" stroke="#666" /><path d="M8.500 8.500l7 7M15.500 8.500l-7 7" stroke="#444" strokeWidth="2" /></>,
  float: <><rect x="2" y="2" width="20" height="20" rx="3" fill="#eee" stroke="#666" strokeWidth="1.600" /><rect x="9" y="6" width="9" height="9" fill="none" stroke="#555" strokeWidth="1.600" /><rect x="6" y="10" width="9" height="9" fill="#eee" stroke="#555" strokeWidth="1.600" /></>,
  closeBox: <><rect x="2" y="2" width="20" height="20" rx="3" fill="#eee" stroke="#666" strokeWidth="1.600" /><path d="M7 7l10 10M17 7L7 17" stroke="#333" strokeWidth="2.800" /></>,
  cellCube: <><path d="M3 9l6-6h11v12l-6 6H3z" fill={YF} stroke="#7a6a20" /><path d="M3 9h11v12M14 9l6-6" fill="none" stroke="#7a6a20" /></>,
  pointDot: <rect x="8" y="8" width="8" height="8" rx="1" fill={YF} opacity="0.85" />,
  selGhost: <><path d="M4 7l6-4h10v8l-6 4H4z" fill="#d8d8d8" stroke="#bbb" /><rect x="1" y="5" width="14" height="16" fill="none" stroke="#ccc" strokeDasharray="2 2" /><Cursor /></>,
};

const Icon = ({ n, s = 24 }: { n: string; s?: number }) => <Ic s={s}>{icons[n]}</Ic>;

const Gradients = () => (
  <DefsSvg width="0" height="0">
    <defs>
      <linearGradient id="grayBar" x1="0" y1="0" x2="0" y2="1">
        <stop offset="0" stopColor="#e6e6e6" />
        <stop offset="1" stopColor="#999" />
      </linearGradient>
      <linearGradient id="rainbow" x1="0" y1="1" x2="1" y2="0">
        <stop offset="0" stopColor="#2f6fc6" />
        <stop offset="0.4" stopColor="#2aa8a0" />
        <stop offset="0.7" stopColor="#e8d33a" />
        <stop offset="1" stopColor="#e07a2f" />
      </linearGradient>
      <linearGradient id="velocityBar" x1="0" y1="0" x2="0" y2="1">
        <stop offset="0" stopColor="#b2162b" />
        <stop offset="0.23" stopColor="#ef8e6d" />
        <stop offset="0.42" stopColor="#f3c6b0" />
        <stop offset="0.5" stopColor="#dddddd" />
        <stop offset="0.62" stopColor="#bcd0f2" />
        <stop offset="0.81" stopColor="#6f92e6" />
        <stop offset="1" stopColor="#3a4cc0" />
      </linearGradient>
      <linearGradient id="holeShade" x1="0" y1="0" x2="0" y2="1">
        <stop offset="0" stopColor="#11163f" />
        <stop offset="0.55" stopColor="#1a2154" />
        <stop offset="1" stopColor="#2f3a86" />
      </linearGradient>
      <radialGradient id="foxBody" cx="0.5" cy="0.55" r="0.6">
        <stop offset="0" stopColor="#ffb01f" />
        <stop offset="0.6" stopColor="#ff5a36" />
        <stop offset="1" stopColor="#e0218a" />
      </radialGradient>
      <linearGradient id="orangeBag" x1="0" y1="0" x2="0" y2="1">
        <stop offset="0" stopColor="#f2672e" />
        <stop offset="1" stopColor="#f38a46" />
      </linearGradient>
      <linearGradient id="helpBlue" x1="0" y1="0" x2="0" y2="1">
        <stop offset="0" stopColor="#1f86d6" />
        <stop offset="1" stopColor="#4aabea" />
      </linearGradient>
    </defs>
  </DefsSvg>
);

/* ---------- dock art ---------- */
const DockArt = ({ children }: { children: React.ReactNode }) => (
  <svg width="48" height="48" viewBox="0 0 48 48">{children}</svg>
);
const dockApps: { key: string; run?: boolean; active?: boolean; art: React.ReactNode }[] = [
  { key: "editor", art: <>
    <rect x="6" y="1" width="36" height="46" rx="4" fill="#f2f2f2" stroke="#ccc" />
    <path d="M11 10h26M11 15h26M11 20h26M11 25h26M11 30h26M11 35h26" stroke="#d4d4d4" />
    <path d="M36 11l4 3-20 23-6 2 2-6z" fill="#2f6fd8" />
    <path d="M14 39l2-6 4 4z" fill="#e8c9a0" />
  </> },
  { key: "firefox", run: true, art: <>
    <circle cx="23" cy="27" r="21" fill="url(#foxBody)" />
    <path d="M30 0c8 8 16 14 15 26-6-6-10-4-14-8-3-5-3-12-1-18z" fill="#ffbd2e" />
    <circle cx="24" cy="27" r="10" fill="#5b3fb8" />
    <path d="M8 22c4-8 14-12 20-6-6 0-10 3-12 8-2 8 5 14 14 12-8 6-22 2-22-14z" fill="#ff8a1f" />
  </> },
  { key: "files", run: true, art: <>
    <rect x="2" y="2" width="44" height="44" rx="5" fill="#a99e88" />
    <path d="M7 14a3 3 0 0 1 3-3h12l3 4h13a3 3 0 0 1 3 3v18a3 3 0 0 1-3 3H10a3 3 0 0 1-3-3z" fill="#f6f4ef" />
    <path d="M7 15a3 3 0 0 1 3-4h12l3 4z" fill="#e2ddd0" />
  </> },
  { key: "mail", art: <>
    <circle cx="24" cy="25" r="22" fill="#1c76c9" />
    <path d="M16 2c10-2 22 4 28 16-8-8-18-8-26-3l-8 2c0-6 2-12 6-15z" fill="#2f8fe0" />
    <path d="M8 18l14-4 24 12-6 14-18 2-14-10z" fill="#f4f4f4" stroke="#b8c6d8" />
    <path d="M8 18l17 9 21-1" fill="none" stroke="#b8c6d8" />
    <path d="M3 30c6 12 26 18 42 8-8 10-34 14-42-8z" fill="#123a76" />
  </> },
  { key: "rhythmbox", art: <>
    <rect x="6" y="2" width="37" height="44" rx="5" fill="#e7e1d5" />
    <circle cx="24.500" cy="24" r="16" fill="#2a2a2a" />
    <circle cx="24.500" cy="24" r="12.500" fill="#f2c21c" />
    <circle cx="24.500" cy="24" r="5" fill="#1a1a1a" />
  </> },
  { key: "writer", art: <>
    <path d="M6 2h26l12 12v28a4 4 0 0 1-4 4H10a4 4 0 0 1-4-4z" fill="#17648f" />
    <path d="M9 5h22l10 10v26a2 2 0 0 1-2 2H11a2 2 0 0 1-2-2z" fill="#f7f9fb" />
    <path d="M32 2h12v12z" fill="#124f73" />
    <path d="M12 17h8M12 21h8M12 25h8M12 30h27M12 35h27M12 39h18" stroke="#1780c4" strokeWidth="2" />
    <rect x="23" y="15" width="14" height="11" fill="#89aac4" />
    <path d="M23 26l5-6 3 3 2-2 4 5z" fill="#4a4a4a" />
  </> },
  { key: "software", art: <>
    <path d="M18 8a6 6 0 0 1 12 0" fill="none" stroke="#e8dccb" strokeWidth="2" />
    <rect x="3" y="8" width="43" height="38" rx="4" fill="url(#orangeBag)" />
    <path d="M24 13L11 41h7l6-16 6 16h7z" fill="#fff" />
    <path d="M8 32h33l-1 3H9z" fill="#fff" />
  </> },
  { key: "help", art: <>
    <circle cx="24" cy="24" r="22" fill="url(#helpBlue)" />
    <text x="24" y="36" textAnchor="middle" fontSize="32" fill="#fff" fontFamily={TXT}>?</text>
  </> },
  { key: "reader", run: true, art: <>
    <rect x="7" y="2" width="36" height="44" rx="4" fill="#f3f1ec" stroke="#ddd" />
    <path d="M12 10h18M12 14h26M12 19h13M12 24h13M12 29h9" stroke="#c8c2b4" strokeWidth="2" />
    <rect x="27" y="17" width="12" height="10" fill="#f25d50" />
    <path d="M29 24c3 2 8-6 4-5s-3 6 4 2" fill="none" stroke="#fff" />
    <path d="M8 33h34l-2 9-6 1-5-6h-9l-5 6-5-1z" fill="#2e5fa8" opacity="0.9" />
    <path d="M11 35h10l-2 6h-6zM28 35h10l-2 6h-6z" fill="#f2f2f2" />
  </> },
  { key: "paraview", run: true, active: true, art: <>
    <path d="M11 8h10l-7 31H3z" fill="#c11c25" stroke="#000" strokeWidth="1" strokeDasharray="2 1" />
    <path d="M25 8h10l-7 31H17z" fill="#1b9447" stroke="#000" strokeWidth="1" strokeDasharray="2 1" />
    <path d="M38 8h10l-7 31H30z" fill="#0b4f9c" stroke="#000" strokeWidth="1" strokeDasharray="2 1" />
  </> },
];

/* ---------- render view ---------- */
const ticks = [778, 838, 888, 939, 989, 1039];
const tickLabels = ["5.2e-01", "0.4", "0.3", "0.2", "0.1", "0.0e+00"];

const RenderScene = () => (
  <svg width="1071" height="795" viewBox="377 258 1071 795" fontFamily={TXT}>
    <rect x="521.500" y="591" width="779" height="127" fill="#2e3a8e" />
    <path d="M903 591v127M919 591v127" stroke="#aab0d8" strokeWidth="1" />
    <path d="M522 591v127M522 591.500h8M522 717.500h8M1300 591v127" stroke="#8a91c4" strokeWidth="1" />
    <circle cx="678" cy="656" r="15" fill="url(#holeShade)" />
    <ellipse cx="688" cy="656" rx="6" ry="11" fill="#fff" />
    <path d="M911 576l2.500 24v110l-2.500 23-2.500-23V600z" fill="#b00000" />

    <path d="M476 952V905" stroke="#f0e400" strokeWidth="1.200" />
    <path d="M476 898l-4 10h8z" fill="#e3d800" stroke="#9a9200" strokeWidth="0.4" />
    <path d="M476 952h46" stroke="#ff3a3a" strokeWidth="1.200" />
    <path d="M480 952h9" stroke="#111" strokeWidth="1.500" />
    <path d="M532 952l-12-4v8z" fill="#e00000" />
    <circle cx="476" cy="952" r="5" fill="#0b5f12" />
    <text x="478" y="909" fontSize="16" fill="#111">Y</text>
    <text x="478.500" y="950" fontSize="16" fill="#111">Z</text>
    <text x="522" y="952" fontSize="15" fill="#111">X</text>

    <rect x="1330" y="778" width="16" height="261" fill="url(#velocityBar)" />
    {ticks.map((y, i) => (
      <React.Fragment key={y}>
        <path d={`M${i === 0 ? 1346 : 1342} ${y}.5h12`} stroke="#222" strokeWidth="1" />
        <text x="1360" y={y + 4} fontSize="16" fill="#222">{tickLabels[i]}</text>
      </React.Fragment>
    ))}
    <text transform="translate(1438 907) rotate(-90)" textAnchor="middle" fontSize="18" fill="#222">velocity Magnitude</text>
  </svg>
);

/* ---------- toolbar data ---------- */
type Tool = string | "|" | "#";
const ToolList = ({ items, w, s, gm = "0 3px 0 6px" }: { items: Tool[]; w?: number; s?: number; gm?: string }) => (
  <>
    {items.map((t, i) =>
      t === "|" ? <ToolSep key={i} /> :
      t === "#" ? <Grip key={i} $m={gm} /> :
      <ToolBtn key={i} $w={w}><Icon n={t} s={s} /></ToolBtn>
    )}
  </>
);
const AXIS_VIEWS = [
  <AxisBtn key="+x" label="+X" up={GF} box={RF} side={YF} />,
  <AxisBtn key="-x" label="-X" flip up={GF} box={RF} side={YF} />,
  <AxisBtn key="+y" label="+Y" flip up={YF} box={YF} side={RF} />,
  <AxisBtn key="-y" label="-Y" up={GF} box={YF} side={RF} />,
  <AxisBtn key="+z" label="+Z" up={YF} box={GF} side={RF} />,
  <AxisBtn key="-z" label="-Z" flip up={YF} box={GF} side={RF} />,
];
const menuItems: [string, string, string][] = [
  ["", "F", "ile"], ["", "E", "dit"], ["", "V", "iew"], ["", "S", "ources"], ["Fi", "l", "ters"],
  ["E", "x", "tractors"], ["", "T", "ools"], ["", "C", "atalyst"], ["", "M", "acros"], ["", "H", "elp"],
];

const CubeTree = ({ dark }: { dark?: boolean }) => (
  <svg width="20" height="22" viewBox="0 0 20 22">
    <path d="M10 0v22" stroke="#b4b4b4" />
    <path d="M2 6l8-3 8 3v10l-8 3-8-3z" fill={dark ? "#5f9c63" : "#86bf6a"} stroke="#5f7f50" />
    <path d="M2 6l8 3v10L2 16z" fill="#6d9a58" />
    <path d="M10 9l8-3" stroke="#5f7f50" />
  </svg>
);
const ServerTree = () => (
  <svg width="20" height="22" viewBox="0 0 20 22">
    <path d="M10 0v4M10 18v4" stroke="#b4b4b4" />
    <rect x="6.500" y="3" width="7" height="16" fill="url(#grayBar)" stroke="#111" />
    <path d="M8 6h4M8 8h4" stroke="#111" />
  </svg>
);
const Eye = () => (
  <svg width="16" height="12" viewBox="0 0 16 12">
    <path d="M0 6c4-6 12-6 16 0-4 6-12 6-16 0z" fill="#f4f4f4" stroke="#a9b4c2" />
    <circle cx="8" cy="6" r="4" fill="#123a6e" />
    <circle cx="6.500" cy="4.500" r="1.200" fill="#fff" />
  </svg>
);
const DockBtnPair = () => (
  <DockBtns>
    <Icon n="float" s={11} />
    <Icon n="closeBox" s={11} />
  </DockBtns>
);

const App = () => (
  <Page>
    <GlobalStyle />
    <Gradients />
    <TopBar>
      <TopLeft>
        <span>Activities</span>
        <AppMenu>
          <svg width="14" height="12" viewBox="0 0 14 12">
            <path d="M3 0h2.500L3 12H0.500zM7 0h2.500L7 12H4.500zM11 0h2.500L11 12H8.500z" fill="#6e6e6e" />
          </svg>
          <span>ParaView</span>
          <svg width="10" height="6" viewBox="0 0 10 6"><path d="M0 0h10L5 6z" fill="#eee" /></svg>
        </AppMenu>
      </TopLeft>
      <Clock>
        <span>Jun 7&nbsp;&nbsp;17:35</span>
        <RecDot />
      </Clock>
      <Tray>
        <svg width="16" height="14" viewBox="0 0 16 14"><path d="M0 3c4-4 12-4 16 0l-8 11z" fill="#fff" /></svg>
        <svg width="16" height="14" viewBox="0 0 16 14"><path d="M0 5h3l5-5v14L3 9H0z" fill="#fff" /><path d="M10 3c2 2 2 6 0 8M12 1c3 3 3 9 0 12" fill="none" stroke="#bbb" /></svg>
        <svg width="12" height="18" viewBox="0 0 12 18"><path d="M4 0h4v2h3v16H1V2h3z" fill="#fff" /><rect x="3" y="4" width="6" height="12" fill="#1d1d1d" /><rect x="3" y="8" width="6" height="8" fill="#fff" opacity="0.9" /></svg>
        <svg width="10" height="6" viewBox="0 0 10 6"><path d="M0 0h10L5 6z" fill="#eee" /></svg>
      </Tray>
    </TopBar>
    <Body>
      <Dock>
        {dockApps.map((a) => (
          <DockItem key={a.key} $active={a.active}>
            {a.run && <RunDot />}
            <DockArt>{a.art}</DockArt>
          </DockItem>
        ))}
        <AppGrid>
          {Array.from({ length: 9 }, (_, i) => <AppGridDot key={i} />)}
        </AppGrid>
      </Dock>
      <Window>
        <TitleBar>
          ParaView 5.9.1
          <WinControls>
            <svg width="10" height="10" viewBox="0 0 10 10"><path d="M0 9h9" stroke="#ddd" /></svg>
            <svg width="10" height="10" viewBox="0 0 10 10"><rect x="1.500" y="3" width="5" height="6" fill="none" stroke="#ddd" /><path d="M3.500 3V1h5v6h-2" fill="none" stroke="#ddd" /></svg>
            <WinClose>
              <svg width="10" height="10" viewBox="0 0 10 10"><path d="M1 1l8 8M9 1l-8 8" stroke="#fff" strokeWidth="1.300" /></svg>
            </WinClose>
          </WinControls>
        </TitleBar>
        <MenuBar>
          {menuItems.map(([a, u, b]) => (
            <MenuItem key={a + u + b}>{a}<u>{u}</u>{b}</MenuItem>
          ))}
        </MenuBar>

        <Toolbar>
          <Grip $m="0 5px 0 0" />
          <ToolList gm="0 4px 0 8px" items={["open", "recent", "save", "fit", "flask", "|", "connect", "disconnect", "clock", "|", "undo", "redo", "|", "viewLink", "gradBox", "palette", "#", "first", "prev", "play", "next", "last", "loop", "#"]} />
          <TimeLabel>Time:</TimeLabel>
          <TimeInput>0</TimeInput>
          <SpinBox>0<SpinArrows /></SpinBox>
          <Grip $m="0 3px 0 10px" />
          <ToolList items={["camKey", "camPlus"]} />
        </Toolbar>
        <Toolbar>
          <Grip $m="0 4px 0 0" />
          <ToolList items={["solidBar", "rescaleMap", "linkBreak", "rangeA", "rangeC", "rangeT", "rangeV"]} />
          <Combo $w={149}>
            <Swatch $c="#bf813a" />
            Solid Color
            <ComboArrow />
          </Combo>
          <Combo $w={79} $off $ml={5}><ComboArrow $off /></Combo>
          <Grip $m="0 4px 0 8px" />
          <Combo $w={150}>Surface<ComboArrow /></Combo>
          <Grip $m="0 3px 0 9px" />
          <ToolList items={["resetFit", "resetCenter", "zoomBox"]} />
          {AXIS_VIEWS.map((v, i) => <ToolBtn key={i}>{v}</ToolBtn>)}
          <ToolList gm="0 4px 0 8px" items={["rotPlus", "rotMinus", "#"]} />
          <ToolBtn $on><Icon n="orient" /></ToolBtn>
          <ToolList gm="0 4px 0 7px" items={["rotCenter", "rotPick", "rotCursor", "#"]} />
        </Toolbar>
        <Toolbar $h={38}>
          <Grip />
          <ToolList w={33} items={["calc", "disc", "cube1", "cube2", "cube3", "cube4", "sphereNet", "stream", "wedge", "blobs", "blobsOut"]} />
          <Grip $m="0 3px 0 8px" />
          <ToolList w={33} items={["plotBox", "select2", "histo", "quartile", "pen", "faded", "star", "braces"]} />
          <Grip $m="0 3px 0 8px" />
          <ToolBtn $w={33}><Icon n="ruler" /></ToolBtn>
        </Toolbar>

        <Main>
          <LeftCol>
            <TabRow>
              <PanelTab>Properties</PanelTab>
              <PanelTab $on>Pipeline Browser</PanelTab>
            </TabRow>
            <DockTitle $h={20}>Pipeline Browser<DockBtnPair /></DockTitle>
            <Tree>
              <TreeRow><EyeCell /><TreeItem><ServerTree />builtin:</TreeItem></TreeRow>
              <TreeRow><EyeCell><Eye /></EyeCell><TreeItem><CubeTree />velocity.pvd</TreeItem></TreeRow>
              <TreeRow><EyeCell><Eye /></EyeCell><TreeItem><CubeTree />Slice1</TreeItem></TreeRow>
              <TreeRow><EyeCell><Eye /></EyeCell><TreeItem $sel><CubeTree dark />Slice2</TreeItem></TreeRow>
            </Tree>
            <HSplit $h={6}><HSplitDots /></HSplit>
            <DockTitle $h={19}>Information<DockBtnPair /></DockTitle>
            <InfoBox>
              <GroupLabel>Statistics</GroupLabel>
              <Group $pad="3px 5px 3px 6px">
                <Row><RowKey $w={59}>Type:</RowKey>Polygonal Mesh</Row>
                <Row><RowKey $w={117}>Number of Cells:</RowKey>0</Row>
                <Row><RowKey $w={117}>Number of Points:</RowKey>0</Row>
                <Row><RowKey $w={59}>Memory:</RowKey>0 MB</Row>
              </Group>
              <GroupLabel>Data Arrays</GroupLabel>
              <Group $pad="3px 6px 5px 6px">
                <Row $ml={2}>Current data time: 0</Row>
                <DataTable $h={46} $mt={3}>
                  <DataHead>
                    <DataCol $w={43}>Name</DataCol>
                    <DataCol $w={73}>Data Type</DataCol>
                    <DataCol>Data Ranges</DataCol>
                  </DataHead>
                </DataTable>
              </Group>
              <GroupLabel>Bounds</GroupLabel>
              <Group $pad="3px 5px 4px 6px">
                <Row><RowKey $w={61}>X Range:</RowKey>Not available</Row>
                <Row><RowKey $w={61}>Y Range:</RowKey>Not available</Row>
                <Row><RowKey $w={61}>Z Range:</RowKey>Not available</Row>
              </Group>
              <GroupLabel>Time</GroupLabel>
              <Group $pad="5px 6px 6px 6px">
                <DataTable $h={66}>
                  <DataHead>
                    <DataCol $w={50}>Index</DataCol>
                    <DataCol>Time</DataCol>
                  </DataHead>
                </DataTable>
              </Group>
            </InfoBox>
          </LeftCol>
          <Gutter $w={5}><GutterDots /></Gutter>

          <Center>
            <CenterTabs>
              <LayoutTab>
                <Icon n="maximize" s={20} />
                Layout #1
                <Icon n="closeBox" s={11} />
              </LayoutTab>
              <PlusTab>+</PlusTab>
            </CenterTabs>
            <ViewBar>
              <ToolList w={26} s={20} items={["viewUndo", "viewRedo", "|", "capture", "|", "threeD", "zoomView", "|", "selPlus", "selMinus", "selToggle", "|", "selTri", "selTriPts", "selBlock", "selFrustum", "selPoly", "selPointsMany", "selInteract", "selCube", "hoverPt", "hoverTri", "hoverTriPts", "qTri", "qPt", "plusBig", "minusBig", "xCircle"]} />
              <ViewName>RenderView1</ViewName>
              <ViewBtn><Icon n="splitV" s={20} /></ViewBtn>
              <ViewBtn><Icon n="splitH" s={20} /></ViewBtn>
              <ViewBtn><Icon n="maximize" s={20} /></ViewBtn>
              <ViewBtn><Icon n="boxX" s={20} /></ViewBtn>
            </ViewBar>
            <ViewFrame><RenderScene /></ViewFrame>
          </Center>
          <Gutter $w={6}><GutterDots /></Gutter>

          <RightCol>
            <ColorMap>
              <DockTitle $h={20} $pl={0}>Color Map Editor<DockBtnPair /></DockTitle>
              <SearchRow>
                <SearchInput>Search ... (use Esc to clear text)</SearchInput>
                <SquareBtn><Icon n="gear" s={18} /></SquareBtn>
                <SquareBtn><Icon n="solidBar" s={18} /></SquareBtn>
                <SquareBtn><Icon n="barE" s={20} /></SquareBtn>
              </SearchRow>
              <ArrayName>Array Name: &lt;none&gt;</ArrayName>
              <MapButtons>
                <SquareBtn $w={27} $h={24}><Icon n="refresh" s={18} /></SquareBtn>
                <SquareBtn $w={28} $h={24}><Icon n="handTick" s={18} /></SquareBtn>
                <SquareBtn $w={27} $h={24}><Icon n="folderGray" s={18} /></SquareBtn>
                <RenderViewsBtn $h={24}><Icon n="viewGray" s={14} />Render Views</RenderViewsBtn>
                <SquareBtn $w={28} $h={24} $on><Icon n="viewGreen" s={18} /></SquareBtn>
              </MapButtons>
            </ColorMap>
            <HSplit $h={7}><HSplitDots /></HSplit>
            <Selection>
              <SelTitle>Selection Display Inspector<DockBtnPair /></SelTitle>
              <WideBtn><Icon n="cellCube" s={13} />Cell Labels<WideCaret /></WideBtn>
              <WideBtn><Icon n="pointDot" s={14} />&nbsp;Point Labels<WideCaret /></WideBtn>
              <ColorRow>
                <ColorBtn $w={127}><RingSwatch $c="#ff00ff" $size={15} />Selection Color</ColorBtn>
                <RowTools>
                  <SquareBtn><Icon n="selGhost" s={16} /></SquareBtn>
                  <SquareBtn><Icon n="gear" s={16} /></SquareBtn>
                </RowTools>
              </ColorRow>
              <ColorRow>
                <ColorBtn $w={195}><RingSwatch $c="#7b00ff" $size={15} />Interactive Selection Color</ColorBtn>
                <RowTools><SquareBtn><Icon n="gear" s={16} /></SquareBtn></RowTools>
              </ColorRow>
            </Selection>
          </RightCol>
        </Main>

        <StatusBar>
          <StatusClose><svg width="8" height="8" viewBox="0 0 8 8"><path d="M1 1l6 6M7 1L1 7" stroke="#666" strokeWidth="1.500" /></svg></StatusClose>
          <Progress />
        </StatusBar>
      </Window>
    </Body>

    <Annotation width="1920" height="1080" viewBox="0 0 1920 1080">
      <rect x="66" y="199" width="95" height="31" fill="none" stroke="#ed1c24" strokeWidth="8" />
      <path d="M454 393L215 252M215 252L287 253M215 252L223 310" fill="none" stroke="#ed1c24" strokeWidth="8" strokeLinecap="round" strokeLinejoin="round" />
    </Annotation>
  </Page>
);

export default App;
